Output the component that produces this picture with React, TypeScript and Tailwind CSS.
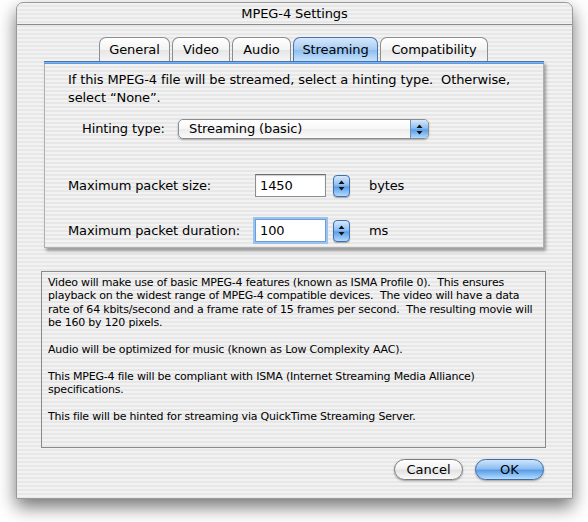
import React from "react";

const stripes =
  "bg-[repeating-linear-gradient(180deg,#f2f2f2_0px,#f2f2f2_2px,#e7e7e7_2px,#e7e7e7_4px)]";

function Tab({ label, w, selected }: { label: string; w: string; selected?: boolean }) {
  return (
    <div
      className={
        "h-[24px] flex items-center justify-center pt-[1px] rounded-t-[7px] border border-b-0 text-[13px] text-black " +
        w +
        (selected
          ? " border-[#4a74ad] bg-[linear-gradient(180deg,#d7e8fb_0%,#a6ccf3_50%,#8cbdf0_52%,#c6e2fd_100%)]"
          : " border-[#8d8d8d] bg-[linear-gradient(180deg,#ffffff_0%,#f3f3f3_50%,#e6e6e6_52%,#f4f4f4_100%)]")
      }
    >
      {label}
    </div>
  );
}

function Arrows() {
  return (
    <svg width="7" height="11" viewBox="0 0 7 11">
      <path d="M3.5 0.5 L6.5 4 L0.5 4 Z" fill="#111" />
      <path d="M3.5 10.5 L6.5 7 L0.5 7 Z" fill="#111" />
    </svg>
  );
}

function Stepper() {
  return (
    <div className="w-[17px] h-[22px] rounded-[4px] border border-[#3e6fae] flex items-center justify-center bg-[linear-gradient(180deg,#d6e8fb_0%,#8fbff1_45%,#5a9fe8_55%,#b3dafd_100%)] shadow-[0_1px_1px_rgba(0,0,0,0.3)]">
      <Arrows />
    </div>
  );
}

export default function App() {
  const font = "font-['Lucida_Grande','DejaVu_Sans',sans-serif]";
  return (
    <div className={"w-[588px] h-[522px] bg-white overflow-hidden pt-[2px] pl-[16px] " + font}>
      <div
        className={
          "w-[557px] h-[497px] rounded-t-[7px] border border-[#9a9a9a] shadow-[0_8px_18px_rgba(0,0,0,0.55)] flex flex-col " +
          stripes
        }
      >
        {/* title bar */}
        <div className="h-[22px] flex items-center justify-center text-[13px] tracking-[-0.1px] text-black border-b border-[#8a8a8a] shrink-0">
          MPEG-4 Settings
        </div>

        {/* tabs */}
        <div className="mt-[12px] flex justify-center gap-[2px] pr-[2px] tracking-[-0.1px]">
          <Tab label="General" w="w-[71px]" />
          <Tab label="Video" w="w-[58px]" />
          <Tab label="Audio" w="w-[59px]" />
          <Tab label="Streaming" w="w-[85px]" selected />
          <Tab label="Compatibility" w="w-[108px]" />
        </div>

        {/* panel */}
        <div className="ml-[27px] w-[500px] shadow-[2px_3px_3px_rgba(0,0,0,0.35)]">
          <div className="h-[3px] bg-[linear-gradient(180deg,#8ebdf0_0%,#4f8fe0_100%)] border-t border-[#4a74ad]" />
          <div className={"h-[184px] border-l border-[#9a9a9a] border-r border-[#b0b0b0] border-b pt-[7px] pl-[23px] text-[13px] tracking-[-0.12px] text-black " + stripes}>
            <div className="leading-[18px] whitespace-pre">
              {"If this MPEG-4 file will be streamed, select a hinting type.  Otherwise,\nselect \u201cNone\u201d."}
            </div>
            <div className="mt-[12px] flex items-center h-[20px]">
              <div className="ml-[14px] w-[96px]">Hinting type:</div>
              <div className="w-[251px] h-[20px] rounded-[5px] border border-[#8c8c8c] bg-[linear-gradient(180deg,#ffffff_0%,#f7f7f7_50%,#ececec_52%,#fafafa_100%)] shadow-[0_1px_2px_rgba(0,0,0,0.3)] flex overflow-hidden">
                <div className="flex-1 pl-[10px] leading-[18px]">Streaming (basic)</div>
                <div className="w-[18px] border-l border-[#6f8fbf] flex items-center justify-center bg-[linear-gradient(180deg,#d6e8fb_0%,#8fbff1_45%,#5a9fe8_55%,#b3dafd_100%)]">
                  <Arrows />
                </div>
              </div>
            </div>
            <div className="mt-[35px] flex items-center h-[23px]">
              <div className="w-[187px]">Maximum packet size:</div>
              <div className="w-[71px] h-[23px] bg-white border border-[#8e8e8e] border-t-[#6e6e6e] shadow-[inset_0_1px_1px_rgba(0,0,0,0.2)] pl-[4px] leading-[21px]">
                1450
              </div>
              <div className="ml-[7px]">
                <Stepper />
              </div>
              <div className="ml-[19px]">bytes</div>
            </div>
            <div className="mt-[22px] flex items-center h-[23px]">
              <div className="w-[187px]">Maximum packet duration:</div>
              <div className="w-[71px] h-[23px] bg-white border border-[#6a9fdc] ring-[2px] ring-[#9cc3f0] pl-[4px] leading-[21px]">
                100
              </div>
              <div className="ml-[7px]">
                <Stepper />
              </div>
              <div className="ml-[19px]">ms</div>
            </div>
          </div>
        </div>

        {/* info box */}
        <div className="ml-[24px] mt-[23px] w-[505px] h-[177px] border border-[#8a8a8a] pl-[6px] pt-[4px] text-[11px] tracking-[-0.2px] leading-[13.4px] text-black whitespace-pre">
          <div>{"Video will make use of basic MPEG-4 features (known as ISMA Profile 0).  This ensures"}</div>
          <div>{"playback on the widest range of MPEG-4 compatible devices.  The video will have a data"}</div>
          <div>{"rate of 64 kbits/second and a frame rate of 15 frames per second.  The resulting movie will"}</div>
          <div>{"be 160 by 120 pixels."}</div>
          <div>{" "}</div>
          <div>{"Audio will be optimized for music (known as Low Complexity AAC)."}</div>
          <div>{" "}</div>
          <div>{"This MPEG-4 file will be compliant with ISMA (Internet Streaming Media Alliance)"}</div>
          <div>{"specifications."}</div>
          <div>{" "}</div>
          <div>{"This file will be hinted for streaming via QuickTime Streaming Server."}</div>
        </div>

        {/* buttons */}
        <div className="mt-[11px] flex justify-end gap-[12px] pr-[28px]">
          <div className="w-[69px] h-[21px] rounded-full border border-[#7a7a7a] bg-[linear-gradient(180deg,#ffffff_0%,#f1f1f1_45%,#e2e2e2_55%,#fbfbfb_100%)] shadow-[0_1px_2px_rgba(0,0,0,0.35)] flex items-center justify-center text-[13px]">
            Cancel
          </div>
          <div className="w-[69px] h-[21px] rounded-full border border-[#3d6aa8] bg-[linear-gradient(180deg,#cfe4fb_0%,#8ebff2_45%,#5b9ee8_55%,#b7ddfd_100%)] shadow-[0_1px_2px_rgba(0,0,0,0.35)] flex items-center justify-center text-[13px]">
            OK
          </div>
        </div>
      </div>
    </div>
  );
}
